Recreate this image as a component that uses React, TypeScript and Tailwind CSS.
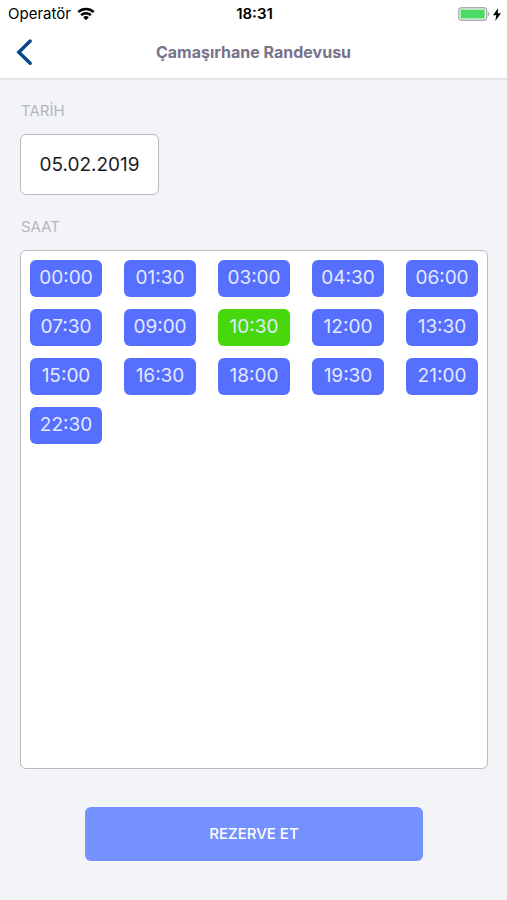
import { useState } from "react";

const SLOTS = [
  "00:00",
  "01:30",
  "03:00",
  "04:30",
  "06:00",
  "07:30",
  "09:00",
  "10:30",
  "12:00",
  "13:30",
  "15:00",
  "16:30",
  "18:00",
  "19:30",
  "21:00",
  "22:30",
];

function WifiIcon() {
  return (
    <svg width="18" height="14" viewBox="0 0 18 14" fill="none" stroke="#000" strokeWidth="2.5" aria-hidden="true">
      <path d="M1.3 5a11.2 11.2 0 0 1 15.4 0" />
      <path d="M4.1 8.2a7.2 7.2 0 0 1 9.8 0" />
      <path d="M9 13.2 6.1 10.3a4.2 4.2 0 0 1 5.8 0Z" fill="#000" stroke="none" />
    </svg>
  );
}

function BatteryIcon() {
  return (
    <svg width="32" height="14" viewBox="0 0 32 14" aria-hidden="true">
      <rect x="0.7" y="0.7" width="28" height="12.6" rx="3" fill="#fff" stroke="#aeaeb0" strokeWidth="1.4" />
      <rect x="2.5" y="2.5" width="24.2" height="9" rx="1" fill="#4cd964" />
      <path d="M30 4.8c1.9.7 1.9 3.7 0 4.4Z" fill="#aeaeb0" />
    </svg>
  );
}

function BoltIcon() {
  return (
    <svg width="8" height="13" viewBox="0 0 8 13" fill="#000" aria-hidden="true">
      <path d="M5.2 0 0 7.3h3.2L2.3 13 8 5.3H4.7Z" />
    </svg>
  );
}

function StatusBar() {
  return (
    <div className="grid h-7 grid-cols-3 items-center pl-2 pr-1.5 text-[15px] text-black">
      <div className="flex items-center gap-1.5">
        <span>Operatör</span>
        <WifiIcon />
      </div>
      <span className="text-center font-semibold">18:31</span>
      <div className="flex items-center justify-end gap-[3px]">
        <BatteryIcon />
        <BoltIcon />
      </div>
    </div>
  );
}

function Header() {
  return (
    <header className="border-b-2 border-[#e6e6e8] bg-white pb-0.5">
      <StatusBar />
      <div className="grid h-12 grid-cols-[48px_1fr_48px] items-center">
        <button type="button" aria-label="Geri" className="flex h-full items-center pl-4">
          <svg width="17" height="28" viewBox="0 0 17 28" fill="none" stroke="#06478c" strokeWidth="3.4" strokeLinecap="round" aria-hidden="true">
            <path d="M14.2 3 2.8 14.2 14.2 25.2" strokeLinejoin="miter" />
          </svg>
        </button>
        <h1 className="text-center text-base font-bold text-[#77738a]">Çamaşırhane Randevusu</h1>
      </div>
    </header>
  );
}

export default function App() {
  const [date, setDate] = useState("05.02.2019");
  const [selected, setSelected] = useState("10:30");

  return (
    <div className="flex min-h-screen flex-col bg-[#f2f4f8] font-['Inter',sans-serif]">
      <Header />

      <main className="flex flex-1 flex-col pb-[39px] pl-5 pr-[19px] pt-[19px]">
        <label htmlFor="date" className="px-px text-[15px] leading-6 text-[#b6b7bb]">
          TARİH
        </label>
        <input
          id="date"
          type="text"
          value={date}
          onChange={(e) => setDate(e.target.value)}
          className="mt-[11px] h-[61px] w-[139px] rounded-md border border-[#b9babd] bg-white text-center text-[19px] text-[#1c1c1e]"
        />

        <h2 id="slots-label" className="mt-5 px-px text-[15px] leading-6 text-[#b6b7bb]">
          SAAT
        </h2>
        <div
          role="group"
          aria-labelledby="slots-label"
          className="mt-[11px] grid flex-1 grid-cols-5 content-start gap-x-[22px] gap-y-3 rounded-md border border-[#b9babd] bg-white p-[9px]"
        >
          {SLOTS.map((slot) => (
            <button
              key={slot}
              type="button"
              aria-pressed={slot === selected}
              onClick={() => setSelected(slot)}
              className={`h-[37px] rounded-md text-[19px] text-[#e4e9ff] ${
                slot === selected ? "bg-[#46d80c]" : "bg-[#566fff]"
              }`}
            >
              {slot}
            </button>
          ))}
        </div>

        <button
          type="button"
          className="mx-auto mt-[38px] h-[54px] w-[338px] max-w-full rounded-md bg-[#7590ff] text-[15px] font-medium text-white"
        >
          REZERVE ET
        </button>
      </main>
    </div>
  );
}
